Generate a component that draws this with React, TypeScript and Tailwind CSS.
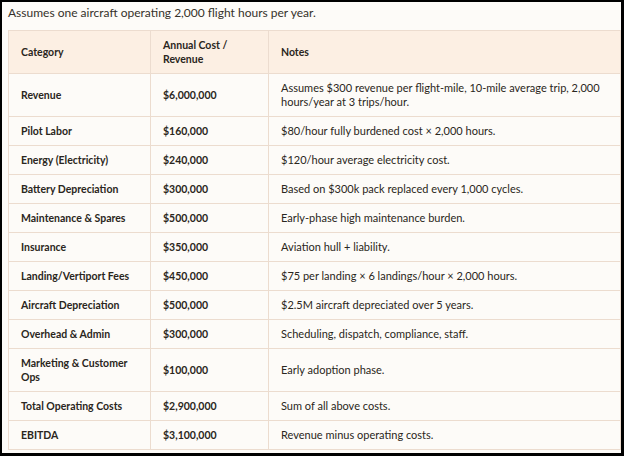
const rows = [
  { category: 'Revenue', amount: '$6,000,000', notes: 'Assumes $300 revenue per flight-mile, 10-mile average trip, 2,000 hours/year at 3 trips/hour.' },
  { category: 'Pilot Labor', amount: '$160,000', notes: '$80/hour fully burdened cost × 2,000 hours.' },
  { category: 'Energy (Electricity)', amount: '$240,000', notes: '$120/hour average electricity cost.' },
  { category: 'Battery Depreciation', amount: '$300,000', notes: 'Based on $300k pack replaced every 1,000 cycles.' },
  { category: 'Maintenance & Spares', amount: '$500,000', notes: 'Early-phase high maintenance burden.' },
  { category: 'Insurance', amount: '$350,000', notes: 'Aviation hull + liability.' },
  { category: 'Landing/Vertiport Fees', amount: '$450,000', notes: '$75 per landing × 6 landings/hour × 2,000 hours.' },
  { category: 'Aircraft Depreciation', amount: '$500,000', notes: '$2.5M aircraft depreciated over 5 years.' },
  { category: 'Overhead & Admin', amount: '$300,000', notes: 'Scheduling, dispatch, compliance, staff.' },
  { category: 'Marketing & Customer Ops', amount: '$100,000', notes: 'Early adoption phase.' },
  { category: 'Total Operating Costs', amount: '$2,900,000', notes: 'Sum of all above costs.' },
  { category: 'EBITDA', amount: '$3,100,000', notes: 'Revenue minus operating costs.' },
];

export default function App() {
  return (
    <div className="h-[456px] w-[624px] bg-black pt-[2px] pl-[2px] pr-[3px] pb-[3px] font-['Lato',sans-serif]">
      <div className="h-full overflow-hidden bg-[#fdfbf8] pl-[6px] text-[#2a2620]">
        <p className="pt-[1px] text-[12px] leading-[20px] text-[#35312a]">
          Assumes one aircraft operating 2,000 flight hours per year.
        </p>
        <table className="mt-[7px] w-[613px] table-fixed border-collapse text-[11px] leading-[14px]">
          <colgroup>
            <col className="w-[142px]" />
            <col className="w-[118px]" />
            <col />
          </colgroup>
          <thead>
            <tr className="bg-[#fcefe3] text-left text-[10.5px] font-bold">
              <th className="border border-[#ecdccf] px-[12px] py-[7px] align-middle">Category</th>
              <th className="border border-[#ecdccf] px-[12px] py-[7px] align-middle">
                Annual Cost /<br />
                Revenue
              </th>
              <th className="border border-[#ecdccf] px-[12px] py-[7px] align-middle">Notes</th>
            </tr>
          </thead>
          <tbody>
            {rows.map((row) => (
              <tr key={row.category}>
                <td className="border border-[#ecdccf] px-[12px] py-[7px] align-middle text-[10.5px] font-bold">{row.category}</td>
                <td className="border border-[#ecdccf] px-[12px] py-[7px] align-middle text-[10.5px] font-bold">{row.amount}</td>
                <td className="border border-[#ecdccf] px-[12px] py-[7px] align-middle">{row.notes}</td>
              </tr>
            ))}
          </tbody>
        </table>
      </div>
    </div>
  );
}
